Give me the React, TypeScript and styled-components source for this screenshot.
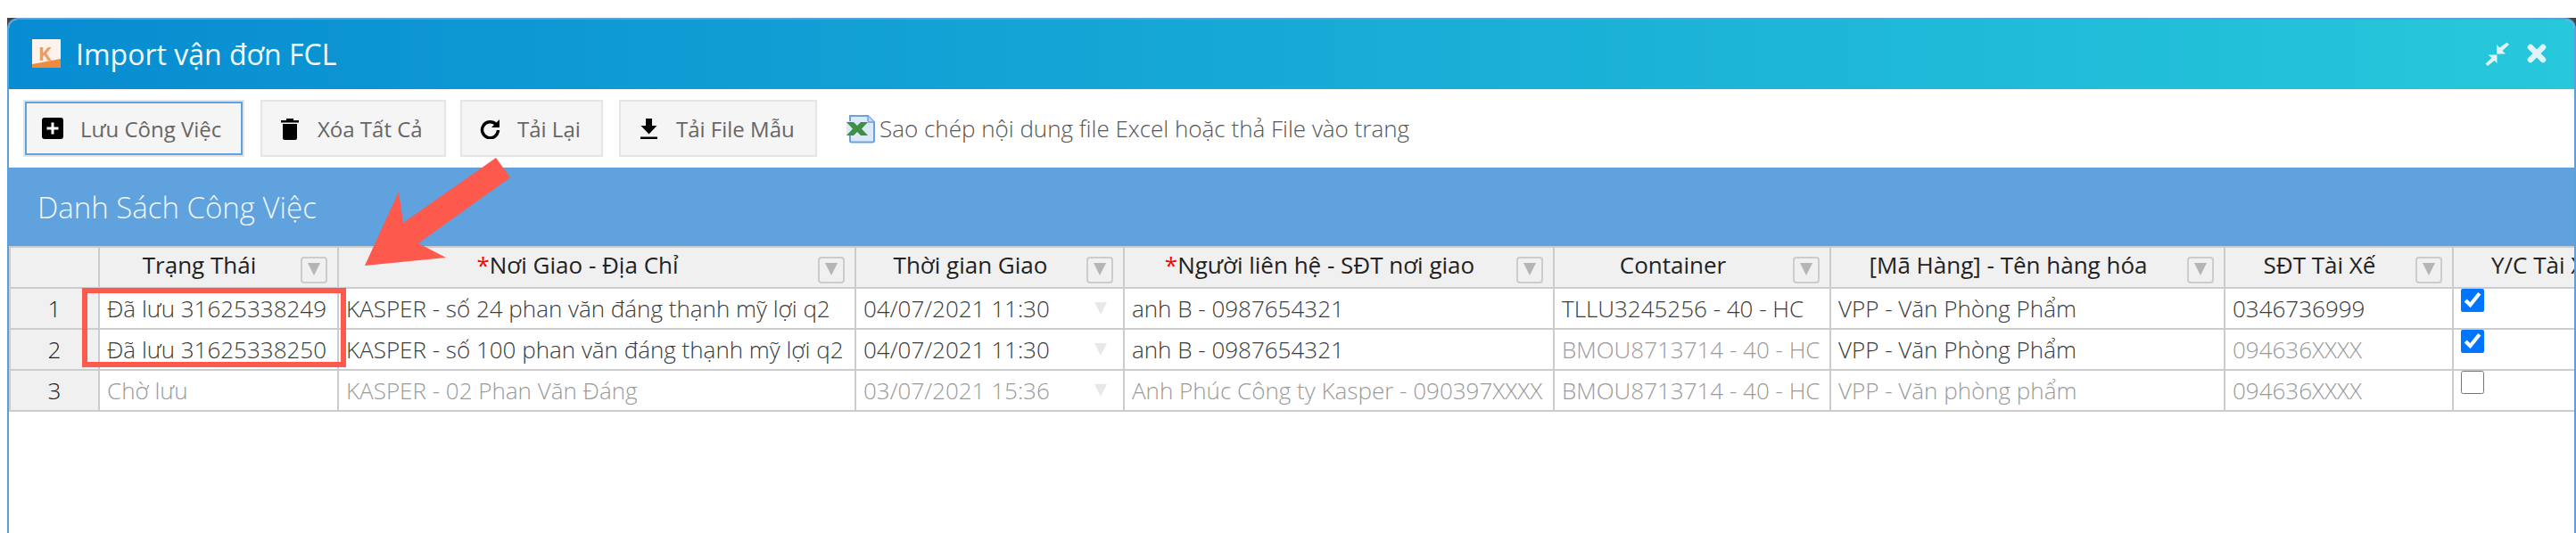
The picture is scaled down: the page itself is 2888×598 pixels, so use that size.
import styled, { createGlobalStyle } from 'styled-components';
import { ReactNode } from 'react';

const GlobalStyles = createGlobalStyle`
  html, body {
    margin: 0;
    padding: 0;
    background: #ffffff;
    overflow: hidden;
  }
  * {
    box-sizing: border-box;
  }
`;

const Page = styled.div`
  position: relative;
  width: 2888px;
  height: 598px;
  padding: 20px 0 0 8px;
  font-family: 'Open Sans', sans-serif;
  overflow: hidden;
`;

const Corners = styled.div`
  height: 578px;
  background: linear-gradient(#444444 12px, #ffffff 12px);
`;

const Window = styled.div`
  height: 100%;
  background: #ffffff;
  border: 2px solid #5b9fdc;
  border-bottom: none;
  border-radius: 12px 12px 0 0;
  overflow: hidden;
`;

const TitleBar = styled.div`
  height: 78px;
  display: flex;
  align-items: center;
  padding: 0 31px 2px 26px;
  background: linear-gradient(90deg, #078cd1, #27c8db);
`;

const Title = styled.div`
  margin-left: 17px;
  flex: 1;
  font-size: 32px;
  color: #f2f9fc;
`;

const WindowActions = styled.div`
  display: flex;
  align-items: center;
  gap: 20px;
`;

const Toolbar = styled.div`
  height: 88px;
  display: flex;
  align-items: center;
  padding: 0 0 0 16px;
`;

const ToolButton = styled.div<{ $active?: boolean; $width: number; $gap: number }>`
  width: ${(props) => props.$width}px;
  height: 64px;
  margin-right: ${(props) => props.$gap}px;
  display: flex;
  align-items: center;
  padding-left: 19px;
  gap: 19px;
  background: #f5f5f5;
  border: 2px solid #e5e5e5;
  box-shadow: ${(props) => (props.$active ? 'inset 0 0 0 2px #5fa2de' : 'none')};
  font-size: 24px;
  color: #666666;
`;

const ToolIcon = styled.span`
  width: 24px;
  display: flex;
  justify-content: center;
`;

const DropHint = styled.div`
  display: flex;
  align-items: center;
  gap: 4px;
  margin-left: 15px;
  font-size: 26px;
  font-weight: 300;
  color: #555555;
`;

const SectionHeader = styled.div`
  height: 88px;
  display: flex;
  align-items: center;
  padding-left: 32px;
  background: #5fa2de;
  font-size: 33px;
  font-weight: 300;
  color: #f0f6fc;
`;

const Grid = styled.table`
  width: 2944px;
  table-layout: fixed;
  border-collapse: collapse;
  font-size: 26px;
`;

const HeadCell = styled.th<{ $plain?: boolean }>`
  position: relative;
  height: 46px;
  padding: 0 ${(props) => (props.$plain ? '0' : '43px')} 6px 0;
  border: 2px solid #cccccc;
  background: #f0f0f0;
  font-weight: 400;
  font-size: 26px;
  color: #222222;
  white-space: nowrap;
  overflow: hidden;
`;

const RowNumber = styled.td`
  height: 46px;
  padding: 0;
  border: 2px solid #cccccc;
  background: #f0f0f0;
  text-align: center;
  font-weight: 300;
  color: #222222;
`;

const Cell = styled.td<{ $muted?: boolean }>`
  position: relative;
  height: 46px;
  padding: 0 8px;
  border: 2px solid #cccccc;
  font-weight: 300;
  color: ${(props) => (props.$muted ? '#9a9a9a' : '#3a3a3a')};
  white-space: nowrap;
  overflow: hidden;
`;

const CheckCell = styled.td`
  height: 46px;
  padding: 0 8px;
  vertical-align: top;
  border: 2px solid #cccccc;
`;

const Check = styled.input`
  display: block;
  width: 26px;
  height: 26px;
  margin: 0;
`;

const FilterBox = styled.span`
  position: absolute;
  right: 11px;
  top: 10px;
  width: 30px;
  height: 30px;
  border: 2px solid #cccccc;
  border-radius: 4px;
  background: #f0f0f0;
  &::after {
    content: '';
    position: absolute;
    left: 6px;
    top: 5px;
    border-left: 7px solid transparent;
    border-right: 7px solid transparent;
    border-top: 14px solid #b5b5b5;
  }
`;

const DateArrow = styled.span`
  position: absolute;
  right: 18px;
  top: 15px;
  border-left: 7px solid transparent;
  border-right: 7px solid transparent;
  border-top: 14px solid #e8e8e8;
`;

const Required = styled.span`
  color: #ff0000;
`;

const HighlightBox = styled.div`
  position: absolute;
  left: 92px;
  top: 323px;
  width: 296px;
  height: 89px;
  border: 6px solid #fd5a4d;
`;

const ArrowMark = styled.svg`
  position: absolute;
  left: 400px;
  top: 170px;
`;

const columns = [100, 268, 580, 301, 482, 310, 442, 256, 205];

type Row = {
  status: string;
  place: string;
  date: string;
  contact: string;
  container: string;
  goods: string;
  driver: string;
  checked: boolean;
  muted: Partial<Record<'status' | 'place' | 'date' | 'contact' | 'container' | 'goods' | 'driver', boolean>>;
};

const rows: Row[] = [
  {
    status: 'Đã lưu 31625338249',
    place: 'KASPER - số 24 phan văn đáng thạnh mỹ lợi q2',
    date: '04/07/2021 11:30',
    contact: 'anh B - 0987654321',
    container: 'TLLU3245256 - 40 - HC',
    goods: 'VPP - Văn Phòng Phẩm',
    driver: '0346736999',
    checked: true,
    muted: {},
  },
  {
    status: 'Đã lưu 31625338250',
    place: 'KASPER - số 100 phan văn đáng thạnh mỹ lợi q2',
    date: '04/07/2021 11:30',
    contact: 'anh B - 0987654321',
    container: 'BMOU8713714 - 40 - HC',
    goods: 'VPP - Văn Phòng Phẩm',
    driver: '094636XXXX',
    checked: true,
    muted: { container: true, driver: true },
  },
  {
    status: 'Chờ lưu',
    place: 'KASPER - 02 Phan Văn Đáng',
    date: '03/07/2021 15:36',
    contact: 'Anh Phúc Công ty Kasper - 090397XXXX',
    container: 'BMOU8713714 - 40 - HC',
    goods: 'VPP - Văn phòng phẩm',
    driver: '094636XXXX',
    checked: false,
    muted: { status: true, place: true, date: true, contact: true, container: true, goods: true, driver: true },
  },
];

const headers: { label: string; required?: boolean; filter?: boolean }[] = [
  { label: 'Trạng Thái', filter: true },
  { label: 'Nơi Giao - Địa Chỉ', required: true, filter: true },
  { label: 'Thời gian Giao', filter: true },
  { label: 'Người liên hệ - SĐT nơi giao', required: true, filter: true },
  { label: 'Container', filter: true },
  { label: '[Mã Hàng] - Tên hàng hóa', filter: true },
  { label: 'SĐT Tài Xế', filter: true },
  { label: 'Y/C Tài Xế' },
];

function Logo() {
  return (
    <svg width="32" height="32" viewBox="0 0 32 32">
      <rect width="32" height="32" fill="#fdf3ea" />
      <path d="M0 32V28L32 22V32Z" fill="#f08a3c" />
      <text x="7" y="24" fontFamily="Open Sans, sans-serif" fontWeight="700" fontSize="22" fill="#f39a5c">
        K
      </text>
    </svg>
  );
}

function CompressIcon() {
  return (
    <svg width="27" height="27" viewBox="0 0 27 27" fill="#def4f8">
      <path d="M13 13.500V3l3.500 3.500L24.500 0.500 27 3l-7.500 7 3.500 3.500z" />
      <path d="M13.500 14.500V24l-3-3-7.500 6-2.500-2.500 7-6.500-4-3.500z" />
    </svg>
  );
}

function CloseIcon() {
  return (
    <svg width="22" height="22" viewBox="0 0 22 22" fill="none" stroke="#def4f8" strokeWidth="6.500" strokeLinecap="round">
      <path d="M4 4l14 14M18 4L4 18" />
    </svg>
  );
}

function PlusIcon() {
  return (
    <svg width="24" height="24" viewBox="0 0 24 24">
      <rect width="24" height="24" rx="3" fill="#000000" />
      <path d="M12 5.500v13M5.500 12h13" stroke="#ffffff" strokeWidth="3" />
    </svg>
  );
}

function TrashIcon() {
  return (
    <svg width="20" height="25" viewBox="0 0 20 25" fill="#000000">
      <path d="M0 3h6V1h8v2h6v2.500H0z" />
      <path d="M2 7h16v16a2 2 0 0 1-2 2H4a2 2 0 0 1-2-2z" />
    </svg>
  );
}

function ReloadIcon() {
  return (
    <svg width="23" height="23" viewBox="0 0 23 23" fill="none">
      <path d="M18 6.500A9 9 0 1 0 20.500 13" stroke="#000000" strokeWidth="3.400" />
      <path d="M22 1v9h-9z" fill="#000000" />
    </svg>
  );
}

function DownloadIcon() {
  return (
    <svg width="19" height="23" viewBox="0 0 19 23" fill="#000000">
      <path d="M6 0h7v8h5.500L9.500 17.500 0.500 8H6z" />
      <rect x="0" y="20.500" width="19" height="2.500" />
    </svg>
  );
}

function ExcelIcon() {
  return (
    <svg width="33" height="33" viewBox="0 0 33 33">
      <path d="M4 2h20l7 7v21a1.500 1.500 0 0 1-1.500 1.500H5.500A1.500 1.500 0 0 1 4 30z" fill="#dbeafa" stroke="#6f9fdf" strokeWidth="2" />
      <path d="M24 2v7h7" fill="#c3d9f3" stroke="#6f9fdf" strokeWidth="1.500" />
      <path d="M0 8h24v16H0z" fill="#dbeafa" />
      <path d="M0 9h8l4 4 4-4h8l-7 7.500 7 7.500h-8l-4-4-4 4H0l7-7.500z" fill="#3f8f45" />
    </svg>
  );
}

const tools: { label: string; icon: ReactNode; width: number; gap: number; active?: boolean }[] = [
  { label: 'Lưu Công Việc', icon: <PlusIcon />, width: 248, gap: 18, active: true },
  { label: 'Xóa Tất Cả', icon: <TrashIcon />, width: 208, gap: 16 },
  { label: 'Tải Lại', icon: <ReloadIcon />, width: 160, gap: 18 },
  { label: 'Tải File Mẫu', icon: <DownloadIcon />, width: 222, gap: 18 },
];

export default function App() {
  return (
    <>
      <GlobalStyles />
      <Page>
        <Corners>
          <Window>
            <TitleBar>
              <Logo />
              <Title>Import vận đơn FCL</Title>
              <WindowActions>
                <CompressIcon />
                <CloseIcon />
              </WindowActions>
            </TitleBar>
            <Toolbar>
              {tools.map((tool) => (
                <ToolButton key={tool.label} $active={tool.active} $width={tool.width} $gap={tool.gap}>
                  <ToolIcon>{tool.icon}</ToolIcon>
                  <span>{tool.label}</span>
                </ToolButton>
              ))}
              <DropHint>
                <ExcelIcon />
                <span>Sao chép nội dung file Excel hoặc thả File vào trang</span>
              </DropHint>
            </Toolbar>
            <SectionHeader>Danh Sách Công Việc</SectionHeader>
            <Grid>
              <colgroup>
                {columns.map((width, index) => (
                  <col key={index} style={{ width }} />
                ))}
              </colgroup>
              <thead>
                <tr>
                  <HeadCell $plain />
                  {headers.map((header) => (
                    <HeadCell key={header.label} $plain={!header.filter}>
                      {header.required && <Required>*</Required>}
                      {header.label}
                      {header.filter && <FilterBox />}
                    </HeadCell>
                  ))}
                </tr>
              </thead>
              <tbody>
                {rows.map((row, index) => (
                  <tr key={index}>
                    <RowNumber>{index + 1}</RowNumber>
                    <Cell $muted={row.muted.status}>{row.status}</Cell>
                    <Cell $muted={row.muted.place}>{row.place}</Cell>
                    <Cell $muted={row.muted.date}>
                      {row.date}
                      <DateArrow />
                    </Cell>
                    <Cell $muted={row.muted.contact}>{row.contact}</Cell>
                    <Cell $muted={row.muted.container}>{row.container}</Cell>
                    <Cell $muted={row.muted.goods}>{row.goods}</Cell>
                    <Cell $muted={row.muted.driver}>{row.driver}</Cell>
                    <CheckCell>
                      <Check type="checkbox" checked={row.checked} readOnly />
                    </CheckCell>
                  </tr>
                ))}
              </tbody>
            </Grid>
          </Window>
        </Corners>
        <HighlightBox />
        <ArrowMark width="180" height="140" viewBox="0 0 180 140">
          <polygon points="156,7 172,29 69,103 100,119 9,128 47,45 52,80" fill="#fd5a4d" />
        </ArrowMark>
      </Page>
    </>
  );
}
